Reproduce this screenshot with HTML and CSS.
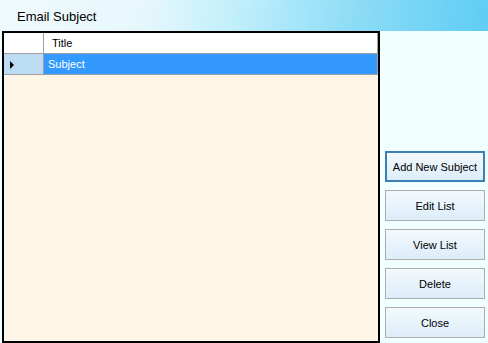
FILE: index.html
```html
<!DOCTYPE html>
<html lang="en">
<head>
    <meta charset="UTF-8">
    <title>Email Subject</title>
    <link rel="stylesheet" href="styles.css">
</head>
<body>
    <div class="window">
        <div class="banner">
            <h1>Email Subject</h1>
        </div>
        <div class="main">
            <div class="grid">
                <table>
                    <thead>
                        <tr>
                            <th class="row-head"></th>
                            <th>Title</th>
                        </tr>
                    </thead>
                    <tbody>
                        <tr class="selected">
                            <td class="row-head"><span class="arrow"></span></td>
                            <td>Subject</td>
                        </tr>
                    </tbody>
                </table>
            </div>
            <div class="actions">
                <button class="btn focused">Add New Subject</button>
                <button class="btn">Edit List</button>
                <button class="btn">View List</button>
                <button class="btn">Delete</button>
                <button class="btn">Close</button>
            </div>
        </div>
    </div>
</body>
</html>
```

FILE: styles.css
```css
body {
    margin: 0;
    font-family: "Liberation Sans", Arial, sans-serif;
    font-size: 11px;
    color: #000;
    background-color: #f0ffff;
}
.window {
    width: 488px;
    height: 343px;
    display: flex;
    flex-direction: column;
    overflow: hidden;
}
.banner {
    height: 31px;
    flex-shrink: 0;
    background: linear-gradient(100deg, #f0fafd 0%, #e6f7fc 30%, #bdeefb 50%, #8edcf6 72%, #5fcdf4 100%);
}
.banner h1 {
    margin: 0;
    padding: 9px 0 0 17px;
    font-size: 13px;
    font-weight: normal;
    color: #000;
}
.main {
    flex: 1;
    display: flex;
    padding: 0 0 0 2px;
}
.grid {
    width: 374px;
    height: 308px;
    border: 2px solid #000;
    background-color: #fdf5e6;
}
table {
    width: 100%;
    border-collapse: collapse;
}
th, td {
    padding: 0 0 0 4px;
    text-align: left;
    font-weight: normal;
    height: 20px;
    border: 1px solid #a0a0a0;
    border-top: none;
    border-left: none;
}
th {
    background-color: #fff;
    padding-left: 8px;
}
th.row-head, td.row-head {
    width: 39px;
    padding: 0;
}
tr.selected td {
    background-color: #3399ff;
    color: #fff;
}
tr.selected td.row-head {
    background-color: #bcdcf4;
}
.arrow {
    display: inline-block;
    margin-left: 6px;
    width: 0;
    height: 0;
    border-top: 4px solid transparent;
    border-bottom: 4px solid transparent;
    border-left: 4px solid #000;
    vertical-align: middle;
}
.actions {
    margin-left: 5px;
    padding-top: 120px;
    display: flex;
    flex-direction: column;
    gap: 8px;
}
.btn {
    width: 100px;
    height: 31px;
    font-family: "Liberation Sans", Arial, sans-serif;
    font-size: 11px;
    color: #000;
    border: 1px solid #adadad;
    background: linear-gradient(#f3f9fd, #dcedf9);
    padding: 0;
}
.btn.focused {
    border: 2px solid #3c7fb1;
}
```
